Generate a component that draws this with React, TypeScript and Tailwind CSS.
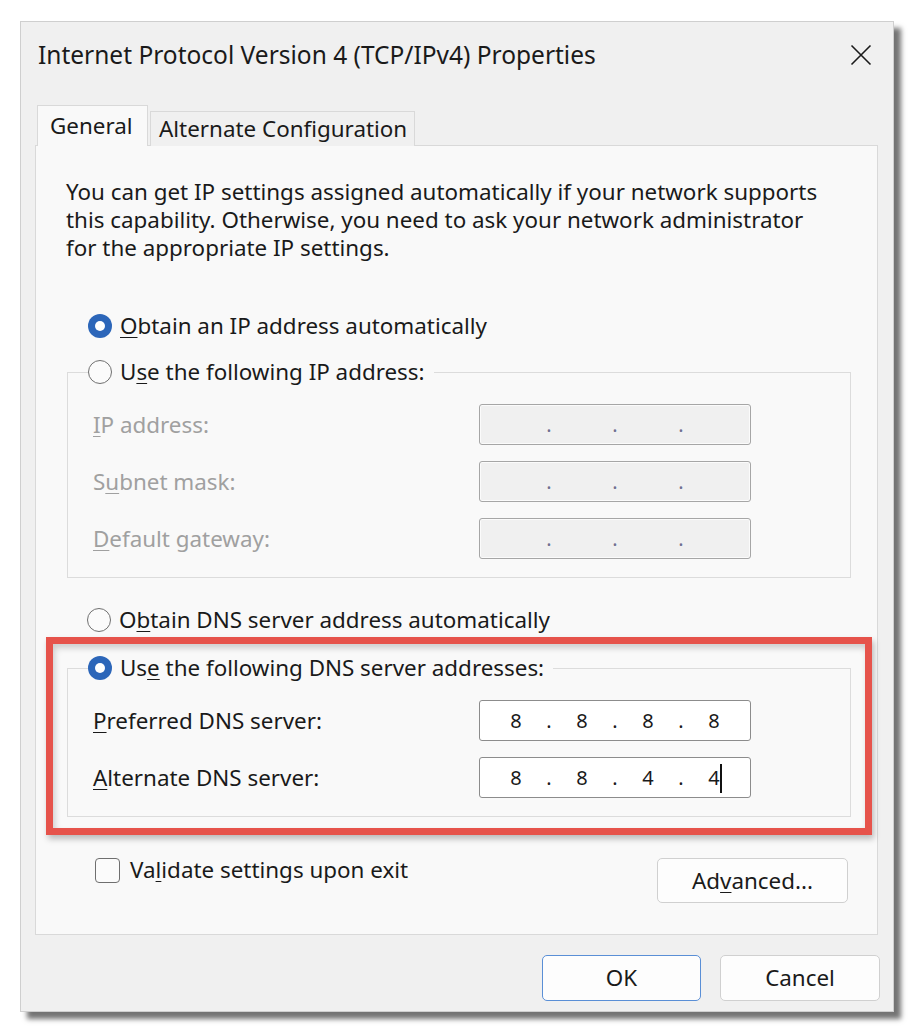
import React from "react";

const U = ({ children }: { children: React.ReactNode }) => (
  <span className="underline decoration-1 underline-offset-[3px]">{children}</span>
);

function Radio({ checked }: { checked: boolean }) {
  return checked ? (
    <span className="w-[24px] h-[24px] rounded-full bg-[#2c66b9] flex items-center justify-center shrink-0">
      <span className="w-[10px] h-[10px] rounded-full bg-white" />
    </span>
  ) : (
    <span className="w-[24px] h-[24px] rounded-full border-[1.5px] border-[#707070] bg-[#fbfbfb] shrink-0" />
  );
}

function IpBox({ values, enabled, cursor }: { values?: string[]; enabled: boolean; cursor?: boolean }) {
  const v = values ?? ["", "", "", ""];
  const dotColor = enabled ? "text-[#1a1a1a]" : "text-[#707090]";
  return (
    <div
      className={`w-[272px] h-[41px] rounded-[3px] border flex items-center pl-[14px] shrink-0 ${
        enabled
          ? "bg-white border-[#8c8c8c]"
          : "bg-[#f0f0f0] border-[#a6a6a6] shadow-[inset_0_0_0_1px_#fbfbfb]"
      }`}
    >
      {v.map((d, i) => (
        <React.Fragment key={i}>
          <span className="w-[44px] h-[28px] flex items-center justify-center relative text-[#1a1a1a] text-[20px]">
            {d}
            {cursor && i === 3 && (
              <span className="absolute left-[28px] top-[0px] w-[2px] h-[29px] bg-[#111]" />
            )}
          </span>
          {i < 3 && <span className={`w-[22px] text-center text-[20px] ${dotColor}`}>.</span>}
        </React.Fragment>
      ))}
    </div>
  );
}

function Row({ label, enabled, values, cursor }: { label: React.ReactNode; enabled: boolean; values?: string[]; cursor?: boolean }) {
  return (
    <div className="flex items-center h-[41px]">
      <div className={`w-[411px] pl-[25px] whitespace-nowrap ${enabled ? "text-[#1a1a1a]" : "text-[#a0a0a0]"}`}>{label}</div>
      <IpBox enabled={enabled} values={values} cursor={cursor} />
    </div>
  );
}

export default function App() {
  return (
    <div className="w-[914px] h-[1032px] bg-white pl-[20px] pt-[21px] font-['Noto_Sans','DejaVu_Sans',sans-serif] text-[22.4px] leading-[28px] text-[#1a1a1a]">
      <div className="w-[874px] h-[991px] bg-[#f0f0f0] border border-[#cfcfcf] shadow-[7px_7px_5px_rgba(0,0,0,0.55)] flex flex-col">
        {/* Title bar */}
        <div className="h-[65px] flex items-center justify-between pl-[17px] pr-[20px]">
          <span className="text-[24.5px] whitespace-nowrap">Internet Protocol Version 4 (TCP/IPv4) Properties</span>
          <svg width="22" height="22" viewBox="0 0 22 22" className="mr-[1px]">
            <path d="M1.5 1.5 L20.5 20.5 M20.5 1.5 L1.5 20.5" stroke="#1a1a1a" strokeWidth="1.6" fill="none" />
          </svg>
        </div>

        {/* Tabs */}
        <div className="flex items-end ml-[16px] mt-[18px] -mb-[1px] relative z-10">
          <div className="w-[111px] h-[41px] bg-[#f9f9f9] border border-b-0 border-[#d9d9d9] flex items-center pl-[12px]">
            General
          </div>
          <div className="ml-[2px] w-[265px] h-[35px] bg-[#f0f0f0] border border-b-0 border-[#d9d9d9] flex items-center pl-[8px] whitespace-nowrap">
            Alternate Configuration
          </div>
        </div>

        {/* Panel */}
        <div className="relative ml-[14px] w-[843px] h-[790px] bg-[#f9f9f9] border border-[#d9d9d9] pt-[32px] pl-[30px] pr-[26px]">
          <p className="whitespace-nowrap">
            You can get IP settings assigned automatically if your network supports
            <br />
            this capability. Otherwise, you need to ask your network administrator
            <br />
            for the appropriate IP settings.
          </p>

          <div className="mt-[50px] ml-[22px] flex items-center gap-[8px] h-[28px]">
            <Radio checked />
            <span>
              <U>O</U>btain an IP address automatically
            </span>
          </div>

          <fieldset className="mt-[18px] ml-[1px] border border-[#dcdcdc] pb-[18px]">
            <legend className="ml-[20px] pr-[9px] flex items-center gap-[8px] h-[28px]">
              <Radio checked={false} />
              <span>
                U<U>s</U>e the following IP address:
              </span>
            </legend>
            <div className="mt-[18px] flex flex-col gap-[16px]">
              <Row label={<><U>I</U>P address:</>} enabled={false} />
              <Row label={<>S<U>u</U>bnet mask:</>} enabled={false} />
              <Row label={<><U>D</U>efault gateway:</>} enabled={false} />
            </div>
          </fieldset>

          <div className="mt-[28px] ml-[21px] flex items-center gap-[8px] h-[28px]">
            <Radio checked={false} />
            <span>
              O<U>b</U>tain DNS server address automatically
            </span>
          </div>

          <fieldset className="mt-[20px] ml-[1px] border border-[#dcdcdc] pb-[18px]">
            <legend className="ml-[20px] pr-[9px] flex items-center gap-[8px] h-[28px]">
              <Radio checked />
              <span>
                Us<U>e</U> the following DNS server addresses:
              </span>
            </legend>
            <div className="mt-[18px] flex flex-col gap-[16px]">
              <Row label={<><U>P</U>referred DNS server:</>} enabled values={["8", "8", "8", "8"]} />
              <Row label={<><U>A</U>lternate DNS server:</>} enabled values={["8", "8", "4", "4"]} cursor />
            </div>
          </fieldset>

          <div className="mt-[41px] flex items-start justify-between">
            <div className="ml-[29px] -mt-[2px] flex items-center gap-[10px] h-[28px]">
              <span className="w-[25px] h-[25px] rounded-[4px] border-[1.5px] border-[#6f6f6f] bg-[#fbfbfb]" />
              <span>
                Va<U>l</U>idate settings upon exit
              </span>
            </div>
            <div className="mr-[3px] w-[191px] h-[45px] rounded-[5px] border border-[#d0d0d0] bg-[#fdfdfd] flex items-center justify-center">
              Ad<U>v</U>anced...
            </div>
          </div>

          {/* Annotation highlight */}
          <div className="absolute left-[10px] top-[491px] w-[826px] h-[198px] border-[7px] border-[#e6534b] shadow-[2px_4px_6px_rgba(0,0,0,0.25),inset_2px_4px_6px_rgba(0,0,0,0.18)] pointer-events-none" />
        </div>

        {/* Buttons */}
        <div className="mt-[20px] flex justify-end gap-[19px] pr-[13px]">
          <div className="w-[159px] h-[46px] rounded-[5px] border-[1.5px] border-[#5a8fd6] bg-[#fdfdfd] flex items-center justify-center">
            OK
          </div>
          <div className="w-[160px] h-[46px] rounded-[5px] border border-[#d0d0d0] bg-[#fdfdfd] flex items-center justify-center">
            Cancel
          </div>
        </div>
      </div>
    </div>
  );
}
